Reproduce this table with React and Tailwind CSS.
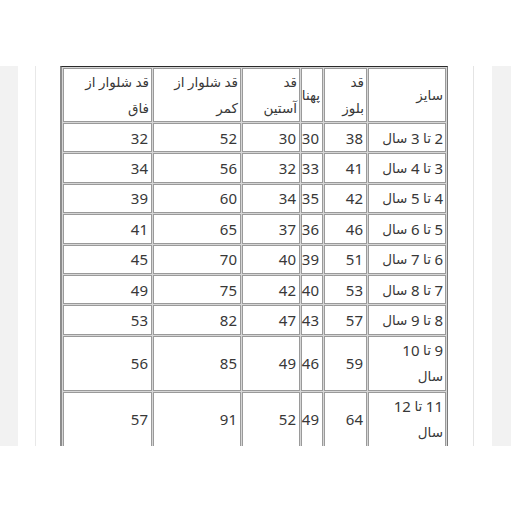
import React from "react";

const rows = [
  ["2 تا 3 سال", 38, 30, 30, 52, 32],
  ["3 تا 4 سال", 41, 33, 32, 56, 34],
  ["4 تا 5 سال", 42, 35, 34, 60, 39],
  ["5 تا 6 سال", 46, 36, 37, 65, 41],
  ["6 تا 7 سال", 51, 39, 40, 70, 45],
  ["7 تا 8 سال", 53, 40, 42, 75, 49],
  ["8 تا 9 سال", 57, 43, 47, 82, 53],
  [["9 تا 10", "سال"], 59, 46, 49, 85, 56],
  [["11 تا 12", "سال"], 64, 49, 52, 91, 57],
];

const cell = "border border-[#9a9a9a] bg-white px-[2px] py-0 align-middle text-right";

// persian words get a slightly smaller size than the digits
const Fa = ({ text }) => {
  const parts = text.split(/(\d+)/).filter((p) => p !== "");
  return (
    <span className="block h-[26px] overflow-visible whitespace-pre leading-[26px]">
      {parts.map((p, i) =>
        /^\d+$/.test(p) ? (
          <span key={i} className="inline-block align-top leading-[26px]">
            {p}
          </span>
        ) : (
          <span key={i} className="inline-block align-top text-[13.5px] leading-[26px]">
            {p}
          </span>
        )
      )}
    </span>
  );
};

const SizeTable = () => {
  return (
    <table
      dir="rtl"
      className="w-[388px] table-fixed border-separate border-spacing-[1px] border border-[#7a7a7a] border-t-[#2a2a2a] border-l-[2px] border-l-[#8c8c8c] bg-[#d6d6d6] text-[15px] leading-[26px] text-[#383838]"
      style={{ fontFamily: '"Noto Sans", "DejaVu Sans", sans-serif' }}
    >
      <colgroup>
        <col className="w-[78px]" />
        <col className="w-[43px]" />
        <col className="w-[22px]" />
        <col className="w-[58px]" />
        <col className="w-[88px]" />
        <col className="w-[89px]" />
      </colgroup>
      <tbody>
        <tr className="h-[54px]">
          <td className={cell}>
            <Fa text="سایز" />
          </td>
          <td className={cell}>
            <Fa text="قد" />
            <Fa text="بلوز" />
          </td>
          <td className={`${cell} px-0`}>
            <Fa text="پهنا" />
          </td>
          <td className={cell}>
            <Fa text="قد" />
            <Fa text="آستین" />
          </td>
          <td className={cell}>
            <Fa text="قد شلوار از" />
            <Fa text="کمر" />
          </td>
          <td className={cell}>
            <Fa text="قد شلوار از" />
            <Fa text="فاق" />
          </td>
        </tr>
        {rows.map((row, i) => {
          const tall = Array.isArray(row[0]);
          return (
            <tr key={i} className={tall ? "h-[55px]" : "h-[29.4px]"}>
              <td className={cell}>
                {tall ? (
                  <>
                    <Fa text={row[0][0]} />
                    <Fa text={row[0][1]} />
                  </>
                ) : (
                  <Fa text={row[0]} />
                )}
              </td>
              {row.slice(1).map((v, j) => (
                <td key={j} className={`${cell} pr-[3px]`}>
                  {v}
                </td>
              ))}
            </tr>
          );
        })}
      </tbody>
    </table>
  );
};

export default function App() {
  return (
    <div className="h-[512px] w-[512px] bg-white">
      <div className="h-[66px]" />
      <div className="flex h-[380px] overflow-hidden">
        <div className="w-[18px] bg-[#f2f2f2]" />
        <div className="w-[17px]" />
        <div className="w-px bg-[#e8e8e8]" />
        <div className="w-[24px]" />
        <div className="w-[389px] overflow-hidden">
          <SizeTable />
        </div>
        <div className="w-[24px]" />
        <div className="w-px bg-[#e4e4e4]" />
        <div className="w-[18px]" />
        <div className="w-[19px] bg-[#f2f2f2]" />
      </div>
    </div>
  );
}
